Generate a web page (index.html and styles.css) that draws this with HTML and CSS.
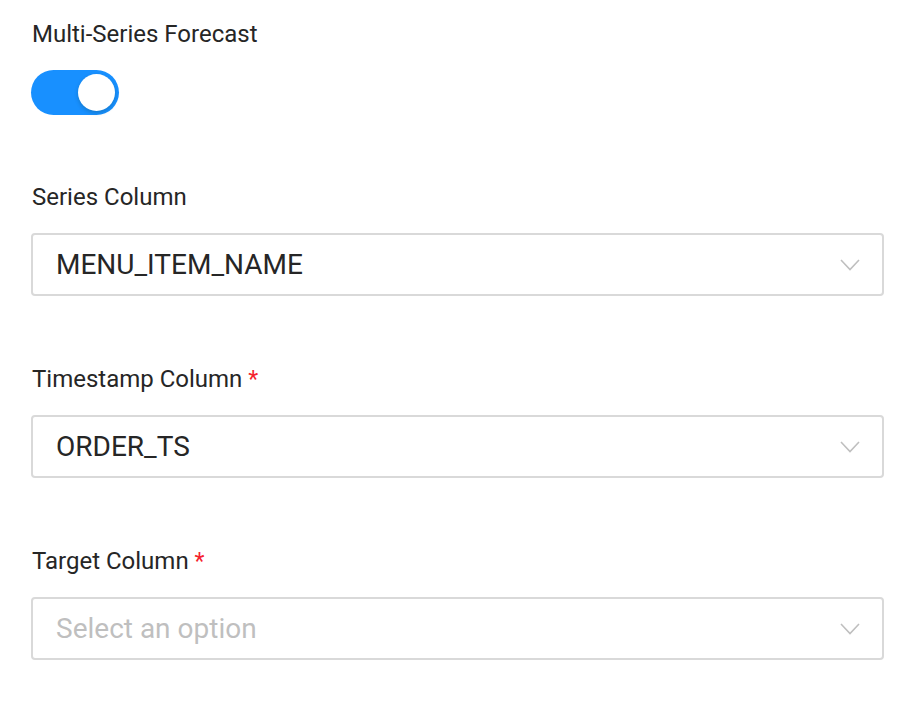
FILE: index.html
```html
<!DOCTYPE html>
<html>
<head>
<meta charset="utf-8">
<link rel="stylesheet" href="styles.css">
</head>
<body>
<div class="form">
  <div class="field field-toggle">
    <div class="label">Multi-Series Forecast</div>
    <div class="switch"><span class="knob"></span></div>
  </div>
  <div class="field">
    <div class="label">Series Column</div>
    <div class="select">
      <span class="value">MENU_ITEM_NAME</span>
      <svg class="chev" width="20" height="12" viewBox="0 0 20 12"><path d="M1 1 L10 10.5 L19 1" fill="none" stroke="#bfbfbf" stroke-width="1.6"/></svg>
    </div>
  </div>
  <div class="field">
    <div class="label">Timestamp Column <span class="req">*</span></div>
    <div class="select">
      <span class="value">ORDER_TS</span>
      <svg class="chev" width="20" height="12" viewBox="0 0 20 12"><path d="M1 1 L10 10.5 L19 1" fill="none" stroke="#bfbfbf" stroke-width="1.6"/></svg>
    </div>
  </div>
  <div class="field">
    <div class="label">Target Column <span class="req">*</span></div>
    <div class="select">
      <span class="value placeholder">Select an option</span>
      <svg class="chev" width="20" height="12" viewBox="0 0 20 12"><path d="M1 1 L10 10.5 L19 1" fill="none" stroke="#bfbfbf" stroke-width="1.6"/></svg>
    </div>
  </div>
</div>
</body>
</html>
```
FILE: styles.css
```css
html, body {
  margin: 0;
  padding: 0;
  background: #fff;
}
body {
  font-family: Roboto, "Liberation Sans", sans-serif;
  color: #262626;
}
.form {
  padding: 20px 30px 0 31px;
  display: flex;
  flex-direction: column;
}
.field {
  display: flex;
  flex-direction: column;
  margin-bottom: 69px;
}
.field-toggle {
  margin-bottom: 68px;
}
.label {
  font-size: 24px;
  line-height: 28px;
  height: 28px;
  margin-bottom: 22px;
  padding-left: 1px;
}
.req {
  color: #f5222d;
  font-size: 23px;
  line-height: 1;
}
.switch {
  width: 88px;
  height: 45px;
  border-radius: 23px;
  background: #1890ff;
  position: relative;
}
.knob {
  position: absolute;
  right: 4px;
  top: 4px;
  width: 37px;
  height: 37px;
  border-radius: 50%;
  background: #fff;
  box-shadow: 0 2px 4px rgba(0, 35, 11, 0.2);
}
.select {
  height: 63px;
  box-sizing: border-box;
  border: 2px solid #d9d9d9;
  border-radius: 4px;
  display: flex;
  align-items: center;
  justify-content: space-between;
  padding: 0 22px 0 23px;
}
.value {
  font-size: 28px;
  color: #262626;
}
.placeholder {
  color: #bfbfbf;
}
.chev {
  display: block;
}
```
